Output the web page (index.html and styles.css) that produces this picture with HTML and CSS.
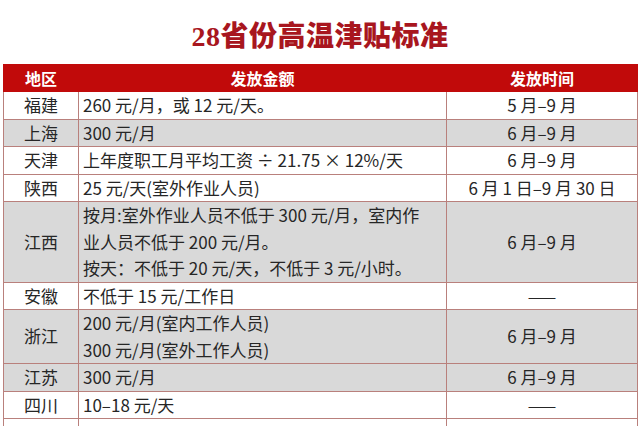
FILE: index.html
```html
<!DOCTYPE html>
<html lang="zh-CN">
<head>
<meta charset="utf-8">
<title>28省份高温津贴标准</title>
<link rel="stylesheet" href="styles.css">
</head>
<body>
<div class="page">
  <h1 class="title">28省份高温津贴标准</h1>
  <table class="grid">
    <colgroup>
      <col class="c-region">
      <col class="c-amount">
      <col class="c-time">
    </colgroup>
    <thead>
      <tr class="head">
        <th>地区</th>
        <th>发放金额</th>
        <th>发放时间</th>
      </tr>
    </thead>
    <tbody>
      <tr>
        <td class="region">福建</td>
        <td class="amount">260 元/月，或 12 元/天。</td>
        <td class="time">5 月–9 月</td>
      </tr>
      <tr class="shade">
        <td class="region">上海</td>
        <td class="amount">300 元/月</td>
        <td class="time">6 月–9 月</td>
      </tr>
      <tr>
        <td class="region">天津</td>
        <td class="amount">上年度职工月平均工资 ÷ 21.75 × 12%/天</td>
        <td class="time">6 月–9 月</td>
      </tr>
      <tr>
        <td class="region">陕西</td>
        <td class="amount">25 元/天(室外作业人员)</td>
        <td class="time">6 月 1 日–9 月 30 日</td>
      </tr>
      <tr class="shade">
        <td class="region">江西</td>
        <td class="amount">按月:室外作业人员不低于 300 元/月，室内作<br>业人员不低于 200 元/月。<br>按天：不低于 20 元/天，不低于 3 元/小时。</td>
        <td class="time">6 月–9 月</td>
      </tr>
      <tr>
        <td class="region">安徽</td>
        <td class="amount">不低于 15 元/工作日</td>
        <td class="time">——</td>
      </tr>
      <tr class="shade">
        <td class="region">浙江</td>
        <td class="amount">200 元/月(室内工作人员)<br>300 元/月(室外工作人员)</td>
        <td class="time">6 月–9 月</td>
      </tr>
      <tr class="shade">
        <td class="region">江苏</td>
        <td class="amount">300 元/月</td>
        <td class="time">6 月–9 月</td>
      </tr>
      <tr>
        <td class="region">四川</td>
        <td class="amount">10–18 元/天</td>
        <td class="time">——</td>
      </tr>
      <tr>
        <td class="region">&nbsp;</td>
        <td class="amount">&nbsp;</td>
        <td class="time">&nbsp;</td>
      </tr>
    </tbody>
  </table>
</div>
</body>
</html>
```
FILE: styles.css
```css
html, body {
  margin: 0;
  padding: 0;
  background: #ffffff;
}

.page {
  width: 640px;
  height: 426px;
  overflow: hidden;
  font-family: "Noto Sans CJK SC", sans-serif;
  color: #262626;
}

.title {
  margin: 0;
  height: 64px;
  box-sizing: border-box;
  padding-top: 3px;
  display: flex;
  align-items: center;
  justify-content: center;
  font-family: "Liberation Serif", "Noto Sans CJK SC", serif;
  font-weight: 900;
  font-size: 28px;
  letter-spacing: 0.5px;
  color: #a8161e;
}

.grid {
  margin-left: 3px;
  width: 634px;
  border-collapse: collapse;
  table-layout: fixed;
  font-size: 17px;
}

.c-region { width: 75px; }
.c-amount { width: 368px; }
.c-time { width: 191px; }

.head th {
  height: 26px;
  padding: 0;
  background: #c10a0a;
  color: #ffffff;
  font-family: "Noto Sans CJK SC", sans-serif;
  font-weight: 700;
  font-size: 16px;
  line-height: 26px;
  text-align: center;
  border: 1px solid #c10a0a;
}

.grid td {
  padding: 0;
  line-height: 26.5px;
  border: 1px solid #b9807c;
  vertical-align: middle;
  white-space: nowrap;
}

.grid tr.shade td {
  background: #d9d9d9;
}

.region {
  text-align: center;
}

.amount {
  padding-left: 4px !important;
  text-align: left;
}

.time {
  text-align: center;
}
```
